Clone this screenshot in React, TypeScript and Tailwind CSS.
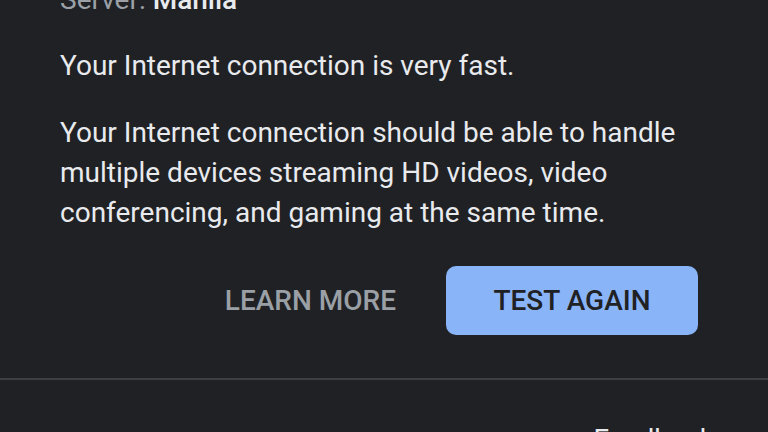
export default function App() {
  return (
    <div className="w-[768px] h-[432px] overflow-hidden bg-[#202124] text-[#e8eaed]" style={{ fontFamily: 'Roboto, "Noto Sans", sans-serif' }}>
      <div className="px-[60px]">
        <div className="mt-[-20px] h-[40px] leading-[40px] text-[28px] whitespace-nowrap">
          <span className="text-[#9aa0a6]">Server: </span>
          <span className="font-medium text-[#e8eaed]">Manila</span>
        </div>
        <p className="mt-[26px] text-[28px] leading-[40px]">Your Internet connection is very fast.</p>
        <p className="mt-[27px] text-[28px] leading-[40px] w-[640px]">
          Your Internet connection should be able to handle multiple devices streaming HD videos, video conferencing, and gaming at the same time.
        </p>
        <div className="mt-[33px] flex items-center justify-end pr-[10px] gap-[50px]">
          <button className="text-[28px] font-medium text-[#9aa0a6]">LEARN MORE</button>
          <button className="w-[252px] h-[69px] rounded-[10px] bg-[#8ab4f8] text-[#202124] text-[28px] font-medium">TEST AGAIN</button>
        </div>
      </div>
      <div className="mt-[43px] h-[2px] bg-[#3c4043]" />
      <div className="flex justify-end pr-[54px] mt-[40px]">
        <span className="text-[28px] leading-[40px] text-[#e8eaed]">Feedback</span>
      </div>
    </div>
  );
}
